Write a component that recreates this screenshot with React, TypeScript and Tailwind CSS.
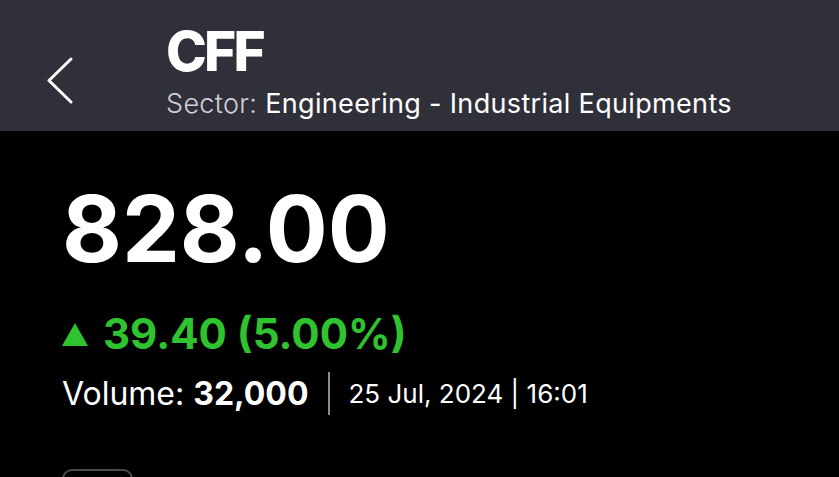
import React from "react";

export default function App() {
  return (
    <div className="w-[839px] h-[477px] overflow-hidden bg-black" style={{ fontFamily: "Inter, 'Noto Sans', sans-serif" }}>
      <header className="h-[131px] bg-[#30303a] flex items-start pl-[46px]">
        <svg className="mt-[57px]" width="27" height="47" viewBox="0 0 27 47" fill="none">
          <path d="M25 2 L3 23.5 L25 45" stroke="#ffffff" strokeWidth="3" strokeLinecap="round" strokeLinejoin="round" />
        </svg>
        <div className="ml-[93px] pt-[24px] flex flex-col">
          <div className="text-[55px] leading-[55px] font-extrabold text-white tracking-[-2.8px]">CFF</div>
          <div className="mt-[9px] text-[27px] leading-[32px] text-white font-normal tracking-[0.33px]">
            <span className="text-[#d2d2d6] font-light">Sector:</span> Engineering - Industrial Equipments
          </div>
        </div>
      </header>
      <main className="pl-[62px] flex flex-col items-start">
        <div className="mt-[52px] text-[92px] leading-[92px] font-bold text-white">828.00</div>
        <div className="mt-[38px] flex items-center text-[42px] leading-[42px] font-bold text-[#2fc42f]">
          <svg width="26" height="23" viewBox="0 0 26 23" className="mr-[15px]">
            <polygon points="13,0 26,23 0,23" fill="#2fc42f" />
          </svg>
          <span>39.40 (5.00%)</span>
        </div>
        <div className="mt-[17px] flex items-center text-white">
          <span className="text-[32px] leading-[38px]">Volume: <span className="font-bold">32,000</span></span>
          <span className="mx-[19px] w-[2px] h-[43px] bg-[#8a8a8f]" />
          <span className="text-[26px] leading-[38px]">25 Jul, 2024 | 16:01</span>
        </div>
        <div className="mt-[54px] w-[71px] h-[40px] rounded-[10px] border-2 border-[#4a4a52]" />
      </main>
    </div>
  );
}
